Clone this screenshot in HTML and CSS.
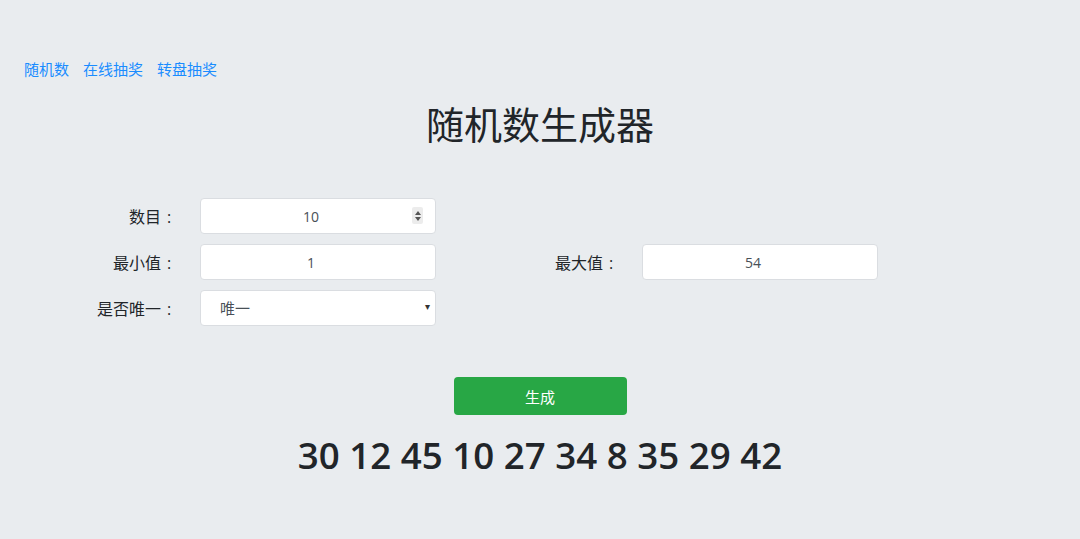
FILE: index.html
```html
<!DOCTYPE html>
<html lang="zh-CN">
<head>
    <meta charset="UTF-8">
    <title>随机数生成器</title>
    <link rel="stylesheet" href="styles.css">
</head>
<body>
    <nav class="links">
        <a href="#">随机数</a>
        <a href="#">在线抽奖</a>
        <a href="#">转盘抽奖</a>
    </nav>

    <h1>随机数生成器</h1>

    <form class="form">
        <div class="row">
            <label class="label">数目<span class="colon">:</span></label>
            <div class="field">
                <input type="text" class="input" value="10">
                <span class="spin"><i class="up"></i><i class="down"></i></span>
            </div>
        </div>
        <div class="row">
            <label class="label">最小值<span class="colon">:</span></label>
            <div class="field">
                <input type="text" class="input" value="1">
            </div>
            <label class="label label-wide">最大值<span class="colon">:</span></label>
            <div class="field">
                <input type="text" class="input" value="54">
            </div>
        </div>
        <div class="row">
            <label class="label">是否唯一<span class="colon">:</span></label>
            <div class="field">
                <select class="select">
                    <option>唯一</option>
                    <option>不唯一</option>
                </select>
                <span class="caret">&#9662;</span>
            </div>
        </div>
    </form>

    <div class="actions">
        <button type="button" class="btn">生成</button>
    </div>

    <div class="result">30 12 45 10 27 34 8 35 29 42</div>
</body>
</html>
```
FILE: styles.css
```css
* {
    box-sizing: border-box;
}
body {
    margin: 0;
    padding: 57px 0 0;
    background-color: #e9ecef;
    color: #212529;
    font-family: 'Open Sans', 'Noto Sans CJK SC', sans-serif;
}
.links {
    display: flex;
    gap: 14px;
    padding-left: 24px;
    font-size: 15px;
    line-height: 24px;
}
.links a {
    color: #1a8cff;
    text-decoration: none;
}
h1 {
    margin: 14px 0 0;
    text-align: center;
    font-weight: 400;
    font-size: 38px;
    line-height: 58px;
}
.form {
    margin-top: 45px;
    display: flex;
    flex-direction: column;
    gap: 10px;
}
.row {
    display: flex;
    align-items: center;
}
.label {
    width: 200px;
    padding-right: 23px;
    text-align: right;
    font-size: 16px;
}
.label-wide {
    width: 206px;
}
.colon {
    display: inline-block;
    width: 16px;
    text-align: center;
}
.field {
    position: relative;
    width: 236px;
}
.input, .select {
    width: 100%;
    height: 36px;
    border: 1px solid #dadde1;
    border-radius: 4px;
    background-color: #fff;
    color: #495057;
    font-family: 'Open Sans', 'Noto Sans CJK SC', sans-serif;
    font-size: 14px;
}
.input {
    padding: 0 20px 0 6px;
    text-align: center;
}
.select {
    appearance: none;
    -webkit-appearance: none;
    padding-left: 19px;
    font-size: 15px;
}
.spin {
    position: absolute;
    right: 13px;
    top: 9px;
    width: 11px;
    height: 17px;
    display: flex;
    flex-direction: column;
    justify-content: center;
    gap: 2px;
    align-items: center;
    background-color: #ececec;
    border-radius: 2px;
}
.spin .up, .spin .down {
    width: 0;
    height: 0;
    border-left: 3.5px solid transparent;
    border-right: 3.5px solid transparent;
}
.spin .up {
    border-bottom: 4px solid #555;
}
.spin .down {
    border-top: 4px solid #555;
}
.caret {
    position: absolute;
    right: 6px;
    top: 9px;
    font-size: 10px;
    color: #333;
    pointer-events: none;
}
.actions {
    margin-top: 51px;
    display: flex;
    justify-content: center;
}
.btn {
    width: 173px;
    height: 38px;
    border: none;
    border-radius: 4px;
    background-color: #28a745;
    color: #fff;
    font-family: 'Open Sans', 'Noto Sans CJK SC', sans-serif;
    font-size: 15px;
}
.result {
    margin-top: 15px;
    text-align: center;
    font-size: 36.7px;
    font-weight: 600;
    line-height: 50px;
}
```
